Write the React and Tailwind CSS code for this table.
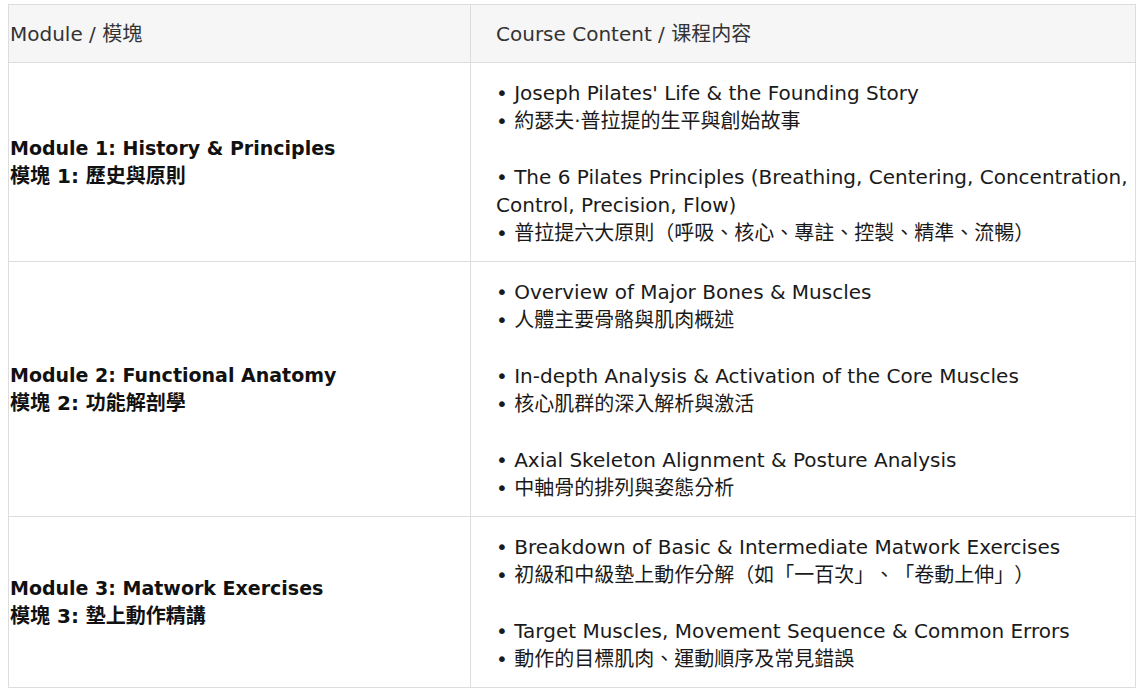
const rows = [
  {
    en: 'Module 1: History & Principles',
    zh: '模塊 1: 歷史與原則',
    items: [
      ["• Joseph Pilates' Life & the Founding Story", '• 約瑟夫·普拉提的生平與創始故事'],
      ['• The 6 Pilates Principles (Breathing, Centering, Concentration, Control, Precision, Flow)', '• 普拉提六大原則（呼吸、核心、專註、控製、精準、流暢）'],
    ],
  },
  {
    en: 'Module 2: Functional Anatomy',
    zh: '模塊 2: 功能解剖學',
    items: [
      ['• Overview of Major Bones & Muscles', '• 人體主要骨骼與肌肉概述'],
      ['• In-depth Analysis & Activation of the Core Muscles', '• 核心肌群的深入解析與激活'],
      ['• Axial Skeleton Alignment & Posture Analysis', '• 中軸骨的排列與姿態分析'],
    ],
  },
  {
    en: 'Module 3: Matwork Exercises',
    zh: '模塊 3: 墊上動作精講',
    items: [
      ['• Breakdown of Basic & Intermediate Matwork Exercises', '• 初級和中級墊上動作分解（如「一百次」、「卷動上伸」）'],
      ['• Target Muscles, Movement Sequence & Common Errors', '• 動作的目標肌肉、運動順序及常見錯誤'],
    ],
  },
];

export default function App() {
  return (
    <div className="bg-white min-h-screen pt-1 pl-2 font-['DejaVu_Sans','Noto_Sans_CJK_TC',sans-serif] text-[#1a1a1a] [text-spacing-trim:space-all]">
      <table className="border-collapse w-[1128px] table-fixed">
        <colgroup>
          <col className="w-[462px]" />
          <col />
        </colgroup>
        <thead>
          <tr className="bg-[#f6f6f6] h-[58px]">
            <th className="border border-[#dddddd] text-left font-normal text-[20px] pl-px align-middle text-[#333]">
              Module / 模塊
            </th>
            <th className="border border-[#dddddd] text-left font-normal text-[20px] pl-[25px] align-middle text-[#333]">
              Course Content / 课程内容
            </th>
          </tr>
        </thead>
        <tbody>
          {rows.map((row) => (
            <tr key={row.en}>
              <td className="border border-[#dddddd] pl-px align-middle font-bold leading-[28px] text-[#111]">
                <div className="text-[19px]">{row.en}</div>
                <div className="text-[20px]">{row.zh}</div>
              </td>
              <td className="border border-[#dddddd] pl-[25px] pr-0 pt-4 pb-[14px] align-middle text-[20px] leading-[28px]">
                {row.items.map((item, i) => (
                  <div key={i}>
                    {i > 0 && <div className="h-[28px]" />}
                    <div>{item[0]}</div>
                    <div>{item[1]}</div>
                  </div>
                ))}
              </td>
            </tr>
          ))}
        </tbody>
      </table>
    </div>
  );
}
